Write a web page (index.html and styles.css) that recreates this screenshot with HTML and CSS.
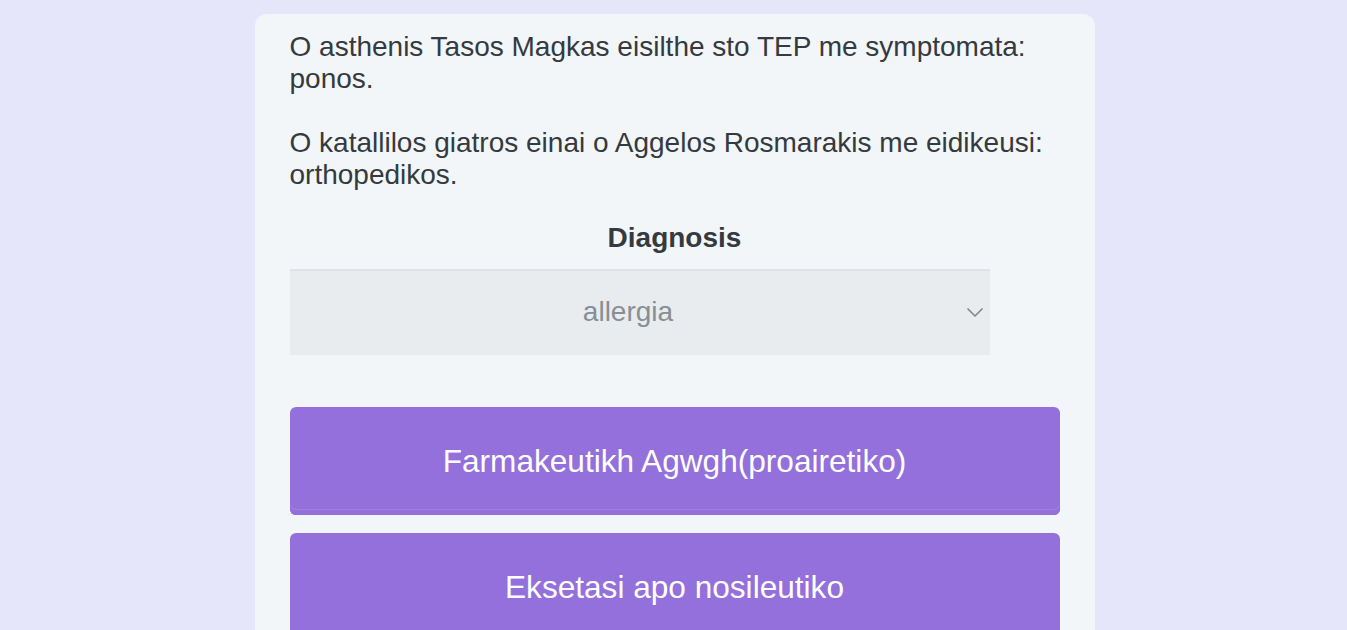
FILE: index.html
```html
<!DOCTYPE html>
<html lang="en">
<head>
<meta charset="utf-8">
<title>Diagnosis</title>
<link rel="stylesheet" href="styles.css">
</head>
<body>
<main class="card">
  <p class="info">O asthenis Tasos Magkas eisilthe sto TEP me symptomata: ponos.</p>
  <p class="info">O katallilos giatros einai o Aggelos Rosmarakis me eidikeusi: orthopedikos.</p>
  <h2 class="label">Diagnosis</h2>
  <div class="select">
    <span class="select-value">allergia</span>
    <svg class="chevron" width="18" height="11" viewBox="0 0 18 11"><path d="M1.5 1.5 L9 9 L16.5 1.5" fill="none" stroke="#7d8389" stroke-width="1.5"/></svg>
  </div>
  <div class="actions">
    <button class="btn">Farmakeutikh Agwgh(proairetiko)</button>
    <button class="btn">Eksetasi apo nosileutiko</button>
  </div>
</main>
</body>
</html>
```
FILE: styles.css
```css
html, body {
  margin: 0;
  padding: 0;
}
body {
  background: #e6e6fa;
  font-family: "Liberation Sans", Arial, sans-serif;
  color: #343a40;
  min-height: 630px;
  padding-left: 2px;
}
.card {
  box-sizing: border-box;
  width: 840px;
  margin: 14px auto 0;
  background: #f3f6f8;
  border-radius: 12px;
  padding: 17px 35px 40px;
}
.info {
  margin: 0 0 32px;
  font-size: 28px;
  line-height: 32px;
}
.info + .info {
  margin-bottom: 0;
}
.label {
  margin: 31px 0 0;
  text-align: center;
  font-size: 28px;
  line-height: 32px;
  font-weight: bold;
}
.select {
  box-sizing: border-box;
  margin-top: 15px;
  width: 700px;
  height: 86px;
  background: #e8ecef;
  border-top: 2px solid #dfe3e7;
  display: flex;
  align-items: center;
  padding-right: 23px;
  position: relative;
}
.select-value {
  flex: 1;
  text-align: center;
  font-size: 28px;
  color: #878e95;
  padding-bottom: 2px;
}
.chevron {
  position: absolute;
  right: 6px;
  top: 36px;
}
.actions {
  margin-top: 52px;
  display: flex;
  flex-direction: column;
  gap: 18px;
}
.btn {
  height: 108px;
  border: none;
  border-radius: 6px;
  background: #9370db;
  color: #fff;
  font-family: "Liberation Sans", Arial, sans-serif;
  font-size: 31.6px;
  box-shadow: inset 0 -5px 0 #9370db, inset 0 -6px 0 #9f80e2;
  padding: 0;
  cursor: pointer;
}
```
